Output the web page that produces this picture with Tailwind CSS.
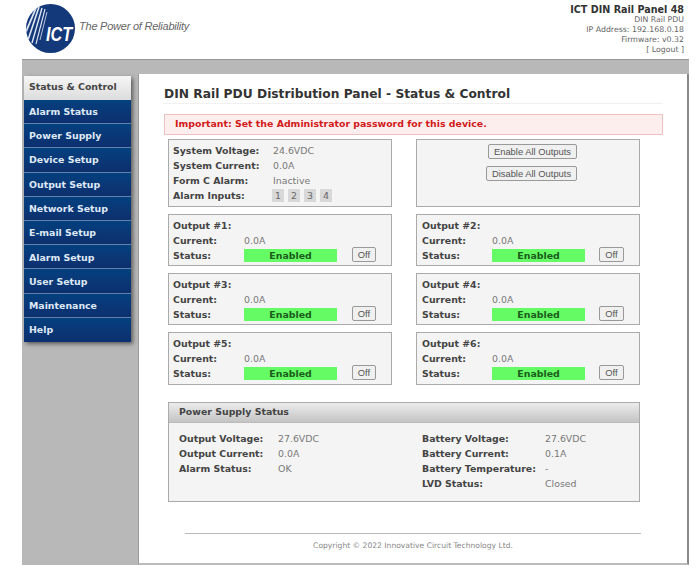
<!DOCTYPE html>
<html>
  <head>
    <meta charset="utf-8" />
    <title>ICT DIN Rail Panel 48</title>
    <script src="https://cdn.jsdelivr.net/npm/@tailwindcss/browser@4"></script>
  </head>
  <body class="bg-white font-['DejaVu_Sans',sans-serif] text-[9.4px] text-[#777]">
    <div class="w-[697px] h-[572px] overflow-hidden">
      <!-- header -->
      <header class="h-[59px] flex justify-between">
        <div class="flex pl-[26px] pt-1">
          <svg width="49" height="49" viewBox="0 0 49 49" class="overflow-visible">
            <defs><clipPath id="disc"><circle cx="24.5" cy="24.5" r="24.5" /></clipPath></defs>
            <circle cx="24.5" cy="24.5" r="24.5" fill="#14397a" />
            <g clip-path="url(#disc)" stroke="#dfe6f2" fill="none">
              <path d="M-1 30 L10 4" stroke-width="1.8" />
              <path d="M2 36 L13 3" stroke-width="1.6" />
              <path d="M6 39 L16 4" stroke-width="1.4" />
              <path d="M10 40 L19 5" stroke-width="1.1" />
              <path d="M14 36 L21 8" stroke-width="0.8" />
            </g>
            <text x="20" y="37" fill="#fff" font-size="21" font-weight="700" font-style="italic" font-family="Liberation Sans" textLength="26" lengthAdjust="spacingAndGlyphs">ICT</text>
          </svg>
          <p class="ml-[4px] mt-[14px] font-['Liberation_Sans',sans-serif] italic text-[11px] text-[#666] tracking-[-0.23px]">The Power of Reliability</p>
        </div>
        <div class="pr-[13px] pt-[4px] text-right text-[7.8px] leading-[10px] text-[#666]">
          <p class="font-bold text-[9.6px] leading-[11px] text-[#333]">ICT DIN Rail Panel 48</p>
          <p>DIN Rail PDU</p>
          <p>IP Address: 192.168.0.18</p>
          <p>Firmware: v0.32</p>
          <p>[ Logout ]</p>
        </div>
      </header>

      <!-- gray band -->
      <div class="ml-[22px] w-[667px] h-[506px] bg-[#b8b8b8] border-t border-[#999] pt-[14px] flex">
        <nav class="ml-[2px] mt-[2px] w-[107px] h-[266px] shadow-[2px_2px_4px_rgba(0,0,0,0.5)] font-bold">
          <a class="flex items-center h-[24px] pb-[1px] pl-[5px] text-[#444] bg-gradient-to-b from-[#f6f6f6] to-[#dcdcdc]">Status &amp; Control</a>
          <a class="flex items-center h-[24.2px] pt-[1px] pl-[5px] text-[#dfe8f5] bg-gradient-to-b from-[#04407f] to-[#0d2f6e] border-b border-[#5f83ac]">Alarm Status</a>
          <a class="flex items-center h-[24.2px] pt-[1px] pl-[5px] text-[#dfe8f5] bg-gradient-to-b from-[#04407f] to-[#0d2f6e] border-b border-[#5f83ac]">Power Supply</a>
          <a class="flex items-center h-[24.2px] pt-[1px] pl-[5px] text-[#dfe8f5] bg-gradient-to-b from-[#04407f] to-[#0d2f6e] border-b border-[#5f83ac]">Device Setup</a>
          <a class="flex items-center h-[24.2px] pt-[2px] pl-[5px] text-[#dfe8f5] bg-gradient-to-b from-[#04407f] to-[#0d2f6e] border-b border-[#5f83ac]">Output Setup</a>
          <a class="flex items-center h-[24.2px] pt-[2px] pl-[5px] text-[#dfe8f5] bg-gradient-to-b from-[#04407f] to-[#0d2f6e] border-b border-[#5f83ac]">Network Setup</a>
          <a class="flex items-center h-[24.2px] pt-[2px] pl-[5px] text-[#dfe8f5] bg-gradient-to-b from-[#04407f] to-[#0d2f6e] border-b border-[#5f83ac]">E-mail Setup</a>
          <a class="flex items-center h-[24.2px] pt-[2px] pl-[5px] text-[#dfe8f5] bg-gradient-to-b from-[#04407f] to-[#0d2f6e] border-b border-[#5f83ac]">Alarm Setup</a>
          <a class="flex items-center h-[24.2px] pt-[2px] pl-[5px] text-[#dfe8f5] bg-gradient-to-b from-[#04407f] to-[#0d2f6e] border-b border-[#5f83ac]">User Setup</a>
          <a class="flex items-center h-[24.2px] pt-[2px] pl-[5px] text-[#dfe8f5] bg-gradient-to-b from-[#04407f] to-[#0d2f6e] border-b border-[#5f83ac]">Maintenance</a>
          <a class="flex items-center h-[24.2px] pl-[5px] text-[#dfe8f5] bg-gradient-to-b from-[#04407f] to-[#0d2f6e]">Help</a>
        </nav>

        <main class="ml-[7px] w-[551px] h-[491px] bg-white border-l border-l-[#999] border-r-2 border-r-[#888] border-b-2 border-b-[#bbb] pl-[25px]">
          <h1 class="mt-[12px] h-[18px] font-bold text-[12.25px] leading-[16px] text-[#333] w-[499px] border-b border-[#f0f0f0]">DIN Rail PDU Distribution Panel - Status &amp; Control</h1>
          <p class="mt-[10px] w-[499px] h-[21px] pl-[10px] flex items-center font-bold text-[#d11a1a] bg-[#fdeeee] border border-[#efc2c2]">Important: Set the Administrator password for this device.</p>

          <div class="mt-[4px] ml-[4px] grid grid-cols-[224px_224px] gap-x-[24px] gap-y-[7px]">
            <section class="h-[68px] bg-[#f4f4f4] border border-[#aaa] px-[4px] pt-[3px] leading-[15px]">
              <div class="flex"><b class="w-[100px] text-[#444]">System Voltage:</b><span>24.6VDC</span></div>
              <div class="flex"><b class="w-[100px] text-[#444]">System Current:</b><span>0.0A</span></div>
              <div class="flex"><b class="w-[100px] text-[#444]">Form C Alarm:</b><span>Inactive</span></div>
              <div class="flex items-center">
                <b class="w-[99px] text-[#444]">Alarm Inputs:</b>
                <span class="flex gap-[4px]">
                  <i class="not-italic w-[12px] h-[13px] leading-[13px] text-center text-[#666] bg-[#d8d8d8]">1</i>
                  <i class="not-italic w-[12px] h-[13px] leading-[13px] text-center text-[#666] bg-[#d8d8d8]">2</i>
                  <i class="not-italic w-[12px] h-[13px] leading-[13px] text-center text-[#666] bg-[#d8d8d8]">3</i>
                  <i class="not-italic w-[12px] h-[13px] leading-[13px] text-center text-[#666] bg-[#d8d8d8]">4</i>
                </span>
              </div>
            </section>
            <section class="h-[68px] bg-[#f4f4f4] border border-[#aaa] flex flex-col items-end pr-[62px] pt-[4px] gap-[7px] font-['Liberation_Sans',sans-serif] text-[9.4px] text-[#555]">
              <button class="h-[15px] w-[89px] leading-[13px] bg-[#f0f0f0] border border-[#999] rounded-[2px]">Enable All Outputs</button>
              <button class="h-[15px] w-[91px] leading-[13px] bg-[#f0f0f0] border border-[#999] rounded-[2px]">Disable All Outputs</button>
            </section>

            <section class="h-[52px] bg-[#f4f4f4] border border-[#aaa] px-[4px] pt-[3px] leading-[15px]">
              <b class="block text-[#444]">Output #1:</b>
              <div class="flex"><b class="w-[71px] text-[#444]">Current:</b><span>0.0A</span></div>
              <div class="flex items-center"><b class="w-[71px] text-[#444]">Status:</b><b class="w-[93px] h-[13px] leading-[13px] text-center bg-[#64fb64] text-[#1c5c1c]">Enabled</b><button class="ml-[15px] -mt-[2px] w-[24px] h-[15px] leading-[13px] text-[#555] font-['Liberation_Sans',sans-serif] bg-[#f0f0f0] border border-[#999] rounded-[2px]">Off</button></div>
            </section>
            <section class="h-[52px] bg-[#f4f4f4] border border-[#aaa] pl-[5px] pt-[3px] leading-[15px]">
              <b class="block text-[#444]">Output #2:</b>
              <div class="flex"><b class="w-[70px] text-[#444]">Current:</b><span>0.0A</span></div>
              <div class="flex items-center"><b class="w-[70px] text-[#444]">Status:</b><b class="w-[93px] h-[13px] leading-[13px] text-center bg-[#64fb64] text-[#1c5c1c]">Enabled</b><button class="ml-[14px] -mt-[2px] w-[25px] h-[15px] leading-[13px] text-[#555] font-['Liberation_Sans',sans-serif] bg-[#f0f0f0] border border-[#999] rounded-[2px]">Off</button></div>
            </section>
            <section class="h-[52px] bg-[#f4f4f4] border border-[#aaa] px-[4px] pt-[3px] leading-[15px]">
              <b class="block text-[#444]">Output #3:</b>
              <div class="flex"><b class="w-[71px] text-[#444]">Current:</b><span>0.0A</span></div>
              <div class="flex items-center"><b class="w-[71px] text-[#444]">Status:</b><b class="w-[93px] h-[13px] leading-[13px] text-center bg-[#64fb64] text-[#1c5c1c]">Enabled</b><button class="ml-[15px] -mt-[2px] w-[24px] h-[15px] leading-[13px] text-[#555] font-['Liberation_Sans',sans-serif] bg-[#f0f0f0] border border-[#999] rounded-[2px]">Off</button></div>
            </section>
            <section class="h-[52px] bg-[#f4f4f4] border border-[#aaa] pl-[5px] pt-[3px] leading-[15px]">
              <b class="block text-[#444]">Output #4:</b>
              <div class="flex"><b class="w-[70px] text-[#444]">Current:</b><span>0.0A</span></div>
              <div class="flex items-center"><b class="w-[70px] text-[#444]">Status:</b><b class="w-[93px] h-[13px] leading-[13px] text-center bg-[#64fb64] text-[#1c5c1c]">Enabled</b><button class="ml-[14px] -mt-[2px] w-[25px] h-[15px] leading-[13px] text-[#555] font-['Liberation_Sans',sans-serif] bg-[#f0f0f0] border border-[#999] rounded-[2px]">Off</button></div>
            </section>
            <section class="h-[53px] bg-[#f4f4f4] border border-[#aaa] px-[4px] pt-[3px] leading-[15px]">
              <b class="block text-[#444]">Output #5:</b>
              <div class="flex"><b class="w-[71px] text-[#444]">Current:</b><span>0.0A</span></div>
              <div class="flex items-center"><b class="w-[71px] text-[#444]">Status:</b><b class="w-[93px] h-[13px] leading-[13px] text-center bg-[#64fb64] text-[#1c5c1c]">Enabled</b><button class="ml-[15px] -mt-[2px] w-[24px] h-[15px] leading-[13px] text-[#555] font-['Liberation_Sans',sans-serif] bg-[#f0f0f0] border border-[#999] rounded-[2px]">Off</button></div>
            </section>
            <section class="h-[53px] bg-[#f4f4f4] border border-[#aaa] pl-[5px] pt-[3px] leading-[15px]">
              <b class="block text-[#444]">Output #6:</b>
              <div class="flex"><b class="w-[70px] text-[#444]">Current:</b><span>0.0A</span></div>
              <div class="flex items-center"><b class="w-[70px] text-[#444]">Status:</b><b class="w-[93px] h-[13px] leading-[13px] text-center bg-[#64fb64] text-[#1c5c1c]">Enabled</b><button class="ml-[14px] -mt-[2px] w-[25px] h-[15px] leading-[13px] text-[#555] font-['Liberation_Sans',sans-serif] bg-[#f0f0f0] border border-[#999] rounded-[2px]">Off</button></div>
            </section>
          </div>

          <section class="mt-[17px] ml-[4px] w-[472px] h-[100px] bg-[#f4f4f4] border border-[#aaa]">
            <h2 class="h-[20px] pl-[10px] flex items-center font-bold text-[#444] bg-gradient-to-b from-[#ececec] to-[#c4c4c4] border-b border-[#bbb]">Power Supply Status</h2>
            <div class="flex pt-[8px] pl-[10px] leading-[15px]">
              <div class="w-[243px]">
                <div class="flex"><b class="w-[99px] text-[#444]">Output Voltage:</b><span>27.6VDC</span></div>
                <div class="flex"><b class="w-[99px] text-[#444]">Output Current:</b><span>0.0A</span></div>
                <div class="flex"><b class="w-[99px] text-[#444]">Alarm Status:</b><span>OK</span></div>
              </div>
              <div>
                <div class="flex"><b class="w-[123px] text-[#444]">Battery Voltage:</b><span>27.6VDC</span></div>
                <div class="flex"><b class="w-[123px] text-[#444]">Battery Current:</b><span>0.1A</span></div>
                <div class="flex"><b class="w-[123px] text-[#444]">Battery Temperature:</b><span>-</span></div>
                <div class="flex"><b class="w-[123px] text-[#444]">LVD Status:</b><span>Closed</span></div>
              </div>
            </div>
          </section>

          <footer class="mt-[31px] ml-[21px] w-[456px] border-t border-[#bbb] pt-[6px] text-center text-[7.6px] text-[#888]">Copyright © 2022 Innovative Circuit Technology Ltd.</footer>
        </main>
      </div>
    </div>
  </body>
</html>
